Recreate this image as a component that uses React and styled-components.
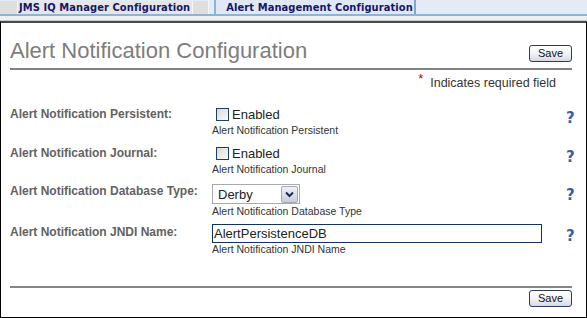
import React from "react";
import styled, { createGlobalStyle } from "styled-components";

const GlobalStyle = createGlobalStyle`
  body {
    margin: 0;
    background: #fff;
    font-family: "Liberation Sans", Arial, sans-serif;
  }
`;

const Page = styled.div`
  width: 587px;
  height: 318px;
  display: flex;
  flex-direction: column;
  overflow: hidden;
`;

const TabStrip = styled.div`
  height: 14px;
  display: flex;
  align-items: flex-start;
  background: #e3ebf6;
  border-bottom: 2px solid #8db3db;
`;

const InactiveTab = styled.div`
  display: flex;
  height: 13px;
  margin-top: 1px;
  background: #e6e6e6;
`;

const TabCap = styled.div`
  width: ${(p) => p.w}px;
  background: #dfdfdf;
  border-left: ${(p) => (p.side === "right" ? "1px solid #f6f6f6" : "none")};
  border-right: 1px solid #f6f6f6;
`;

const TabText = styled.span`
  font-family: "DejaVu Sans Condensed", "DejaVu Sans", Verdana, sans-serif;
  font-weight: bold;
  font-size: 11px;
  letter-spacing: 0.1px;
  line-height: 13px;
  color: #16166a;
  white-space: nowrap;
  padding: ${(p) => p.pad};
`;

const ActiveTab = styled.div`
  display: flex;
  height: 14px;
  margin-left: ${(p) => p.ml}px;
  background: #dfe8f5;
  border-left: 2px solid #8db3db;
  border-right: 2px solid #7ea7d4;
`;

const TabShade = styled.div`
  height: 4px;
  background: #efefef;
  border-bottom: 1px solid #c9c9c9;
`;

const Panel = styled.div`
  flex: 1;
  display: flex;
  flex-direction: column;
  border: 1px solid #000;
  border-top: 2px solid #4a4a4a;
`;

const Header = styled.div`
  display: flex;
  justify-content: space-between;
  align-items: flex-end;
  margin: 0 14px 0 9px;
  padding: 15px 0 5px;
  border-bottom: 2px solid #828282;
`;

const Title = styled.h1`
  margin: 0;
  font-size: 22px;
  line-height: 25px;
  font-weight: normal;
  color: #7d7d7d;
`;

const SaveButton = styled.button`
  width: 43px;
  height: 17px;
  padding: 0;
  margin-bottom: ${(p) => p.mb || 0}px;
  border: 1px solid #2d3a64;
  border-radius: 3px;
  background: linear-gradient(#ffffff, #f2f3f7 50%, #d5d9e6);
  font-family: "Liberation Sans", Arial, sans-serif;
  font-size: 11px;
  line-height: 15px;
  color: #111;
`;

const Required = styled.div`
  margin: 5px 30px 0 0;
  text-align: right;
  font-size: 12.5px;
  line-height: 15px;
  color: #333;
`;

const Star = styled.span`
  color: #d40000;
  font-size: 13px;
  position: relative;
  top: -4px;
  margin-right: 7px;
`;

const Form = styled.div`
  display: flex;
  flex-direction: column;
  margin: 16px 8px 0 9px;
`;

const Row = styled.div`
  display: grid;
  grid-template-columns: 202px 1fr 12px;
  height: ${(p) => p.h}px;
`;

const Label = styled.div`
  font-size: 12px;
  font-weight: bold;
  line-height: 15px;
  color: #626262;
  padding-top: ${(p) => p.pt || 0}px;
`;

const Control = styled.div`
  display: flex;
  flex-direction: column;
  align-items: flex-start;
`;

const CheckLine = styled.label`
  display: flex;
  align-items: center;
  height: 15px;
  padding-left: 4px;
  gap: 3px;
  font-size: 13px;
  color: #222;
`;

const CheckBox = styled.span`
  width: 11px;
  height: 11px;
  border: 1px solid #1c3d6e;
  background: linear-gradient(135deg, #d9d9d2, #fbfbf8);
`;

const Help = styled.div`
  margin-top: ${(p) => p.mt ?? 1}px;
  font-size: 10.5px;
  line-height: 13px;
  color: #333;
  white-space: nowrap;
`;

const SelectBox = styled.div`
  width: 81px;
  height: 18px;
  display: flex;
  align-items: center;
  justify-content: space-between;
  border: 1px solid #a7abb0;
  background: #fff;
  font-size: 13px;
  color: #222;
  padding-left: 5px;
`;

const DropButton = styled.span`
  width: 15px;
  height: 15px;
  margin-right: 1px;
  display: flex;
  align-items: center;
  justify-content: center;
  border: 1px solid #a3a8bd;
  border-radius: 2px;
  background: linear-gradient(#f1f2f6, #c9ccda);
`;

const TextField = styled.div`
  width: 326px;
  height: 17px;
  border: 1px solid #14325f;
  padding: 0 1px;
  font-size: 13px;
  line-height: 17px;
  color: #222;
`;

const HelpMark = styled.span`
  padding-top: ${(p) => p.pt}px;
  font-family: "DejaVu Sans", Verdana, sans-serif;
  font-weight: bold;
  font-size: 15px;
  line-height: 15px;
  color: #3a5ea8;
`;

const Footer = styled.div`
  margin: auto 14px 0 9px;
  padding: 2px 0 10px;
  border-top: 2px solid #848484;
  display: flex;
  justify-content: flex-end;
`;

function Chevron() {
  return (
    <svg width="9" height="7" viewBox="0 0 9 7">
      <path d="M1 1.5 L4.5 5 L8 1.5" fill="none" stroke="#1d2a55" strokeWidth="2" />
    </svg>
  );
}

function CheckField({ help }) {
  return (
    <Control>
      <CheckLine>
        <CheckBox />
        Enabled
      </CheckLine>
      <Help mt={2}>{help}</Help>
    </Control>
  );
}

export default function App() {
  return (
    <Page>
      <GlobalStyle />
      <TabStrip>
        <InactiveTab>
          <TabCap w={17} />
          <TabText pad="0 2px 0 1px">JMS IQ Manager Configuration</TabText>
          <TabCap w={15} side="right" />
        </InactiveTab>
        <ActiveTab ml={5}>
          <TabText pad="1px 1px 0 10px">Alert Management Configuration</TabText>
        </ActiveTab>
      </TabStrip>
      <TabShade />
      <Panel>
        <Header>
          <Title>Alert Notification Configuration</Title>
          <SaveButton mb={1}>Save</SaveButton>
        </Header>
        <Required>
          <Star>*</Star>Indicates required field
        </Required>
        <Form>
          <Row h={39}>
            <Label>Alert Notification Persistent:</Label>
            <CheckField help="Alert Notification Persistent" />
            <HelpMark pt={4}>?</HelpMark>
          </Row>
          <Row h={38}>
            <Label>Alert Notification Journal:</Label>
            <CheckField help="Alert Notification Journal" />
            <HelpMark pt={4}>?</HelpMark>
          </Row>
          <Row h={40}>
            <Label>Alert Notification Database Type:</Label>
            <Control>
              <SelectBox>
                Derby
                <DropButton>
                  <Chevron />
                </DropButton>
              </SelectBox>
              <Help>Alert Notification Database Type</Help>
            </Control>
            <HelpMark pt={4}>?</HelpMark>
          </Row>
          <Row h={34}>
            <Label pt={1}>Alert Notification JNDI Name:</Label>
            <Control>
              <TextField>AlertPersistenceDB</TextField>
              <Help mt={0}>Alert Notification JNDI Name</Help>
            </Control>
            <HelpMark pt={5}>?</HelpMark>
          </Row>
        </Form>
        <Footer>
          <SaveButton>Save</SaveButton>
        </Footer>
      </Panel>
    </Page>
  );
}
